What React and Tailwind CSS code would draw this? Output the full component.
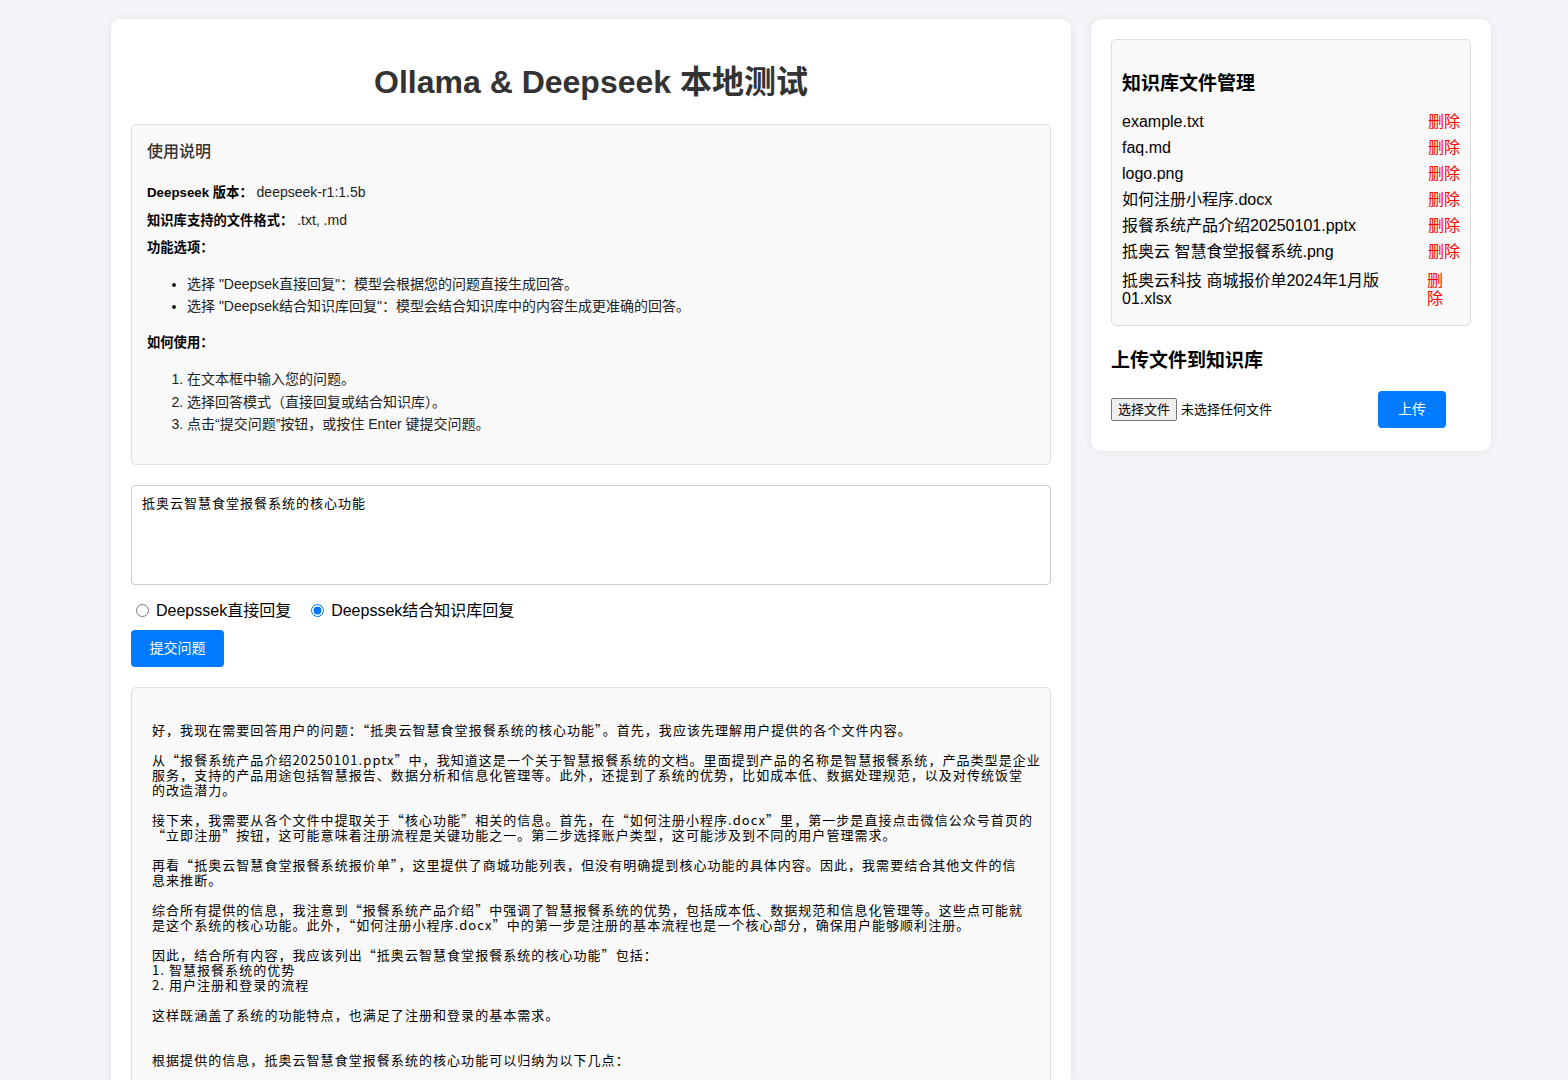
const FILES = [
  'example.txt',
  'faq.md',
  'logo.png',
  '如何注册小程序.docx',
  '报餐系统产品介绍20250101.pptx',
  '抵奥云 智慧食堂报餐系统.png',
];

const ANSWER = [
  '',
  '好，我现在需要回答用户的问题：“抵奥云智慧食堂报餐系统的核心功能”。首先，我应该先理解用户提供的各个文件内容。',
  '',
  '从“报餐系统产品介绍20250101.pptx”中，我知道这是一个关于智慧报餐系统的文档。里面提到产品的名称是智慧报餐系统，产品类型是企业',
  '服务，支持的产品用途包括智慧报告、数据分析和信息化管理等。此外，还提到了系统的优势，比如成本低、数据处理规范，以及对传统饭堂',
  '的改造潜力。',
  '',
  '接下来，我需要从各个文件中提取关于“核心功能”相关的信息。首先，在“如何注册小程序.docx”里，第一步是直接点击微信公众号首页的',
  '“立即注册”按钮，这可能意味着注册流程是关键功能之一。第二步选择账户类型，这可能涉及到不同的用户管理需求。',
  '',
  '再看“抵奥云智慧食堂报餐系统报价单”，这里提供了商城功能列表，但没有明确提到核心功能的具体内容。因此，我需要结合其他文件的信',
  '息来推断。',
  '',
  '综合所有提供的信息，我注意到“报餐系统产品介绍”中强调了智慧报餐系统的优势，包括成本低、数据规范和信息化管理等。这些点可能就',
  '是这个系统的核心功能。此外，“如何注册小程序.docx”中的第一步是注册的基本流程也是一个核心部分，确保用户能够顺利注册。',
  '',
  '因此，结合所有内容，我应该列出“抵奥云智慧食堂报餐系统的核心功能”包括：',
  '1. 智慧报餐系统的优势',
  '2. 用户注册和登录的流程',
  '',
  '这样既涵盖了系统的功能特点，也满足了注册和登录的基本需求。',
  '',
  '',
  '根据提供的信息，抵奥云智慧食堂报餐系统的核心功能可以归纳为以下几点：',
  '',
].join('\n');

function FileRow({ name }) {
  return (
    <li className="flex justify-between leading-[18px] py-[4px]">
      <span>{name}</span>
      <span className="text-[#ff0000] cursor-pointer">删除</span>
    </li>
  );
}

export default function App() {
  return (
    <div className="min-h-screen bg-[#f4f4f9] font-['Liberation_Sans','Noto_Sans_CJK_SC',sans-serif] text-black">
      <div className="flex items-start gap-5 pl-[111px] pt-[19px]">

        {/* main column */}
        <div className="w-[960px] bg-white rounded-[10px] shadow-[0_0_10px_rgba(0,0,0,0.08)] px-5 pt-5 pb-0 overflow-hidden">
          <h1 className="mt-[23px] text-center text-[32px] leading-[40px] font-bold text-[#333]">
            Ollama &amp; Deepseek 本地测试
          </h1>

          <div className="mt-[22px] bg-[#f9f9f9] border border-[#ddd] rounded-[5px] px-[15px] pt-[17px] pb-[28px] text-[#222]">
            <h3 className="text-[16px] leading-[20px] font-medium text-[#333]">使用说明</h3>
            <p className="mt-[21px] h-[18px] text-[14px] leading-[18px]">
              <strong className="text-[13.3px] font-bold text-black">Deepseek 版本：</strong> deepseek-r1:1.5b
            </p>
            <p className="mt-[10px] h-[18px] text-[14px] leading-[18px]">
              <strong className="text-[13.3px] font-bold text-black">知识库支持的文件格式：</strong> .txt, .md
            </p>
            <p className="mt-[9px] h-[18px] text-[14px] leading-[18px]">
              <strong className="text-[13.3px] font-bold text-black">功能选项：</strong>
            </p>
            <ul className="mt-[17px] pl-10 list-disc text-[14px] leading-[22px]">
              <li>选择 "Deepsek直接回复"：模型会根据您的问题直接生成回答。</li>
              <li>选择 "Deepsek结合知识库回复"：模型会结合知识库中的内容生成更准确的回答。</li>
            </ul>
            <p className="mt-[16px] h-[18px] text-[14px] leading-[18px]">
              <strong className="text-[13.3px] font-bold text-black">如何使用：</strong>
            </p>
            <ol className="mt-[17px] pl-10 list-decimal text-[14px] leading-[22.5px]">
              <li>在文本框中输入您的问题。</li>
              <li>选择回答模式（直接回复或结合知识库）。</li>
              <li>点击“提交问题”按钮，或按住 Enter 键提交问题。</li>
            </ol>
          </div>

          <textarea
            className="mt-5 block w-full h-[100px] resize-none border border-[#ccc] rounded-[4px] p-[10px] pt-[9px] text-[13px] leading-[15px] tracking-[1px] font-['Noto_Sans_CJK_SC',monospace] text-black outline-none"
            defaultValue="抵奥云智慧食堂报餐系统的核心功能"
          />

          <div className="mt-[15px] flex items-center text-[16px] leading-[22px]">
            <label className="flex items-center">
              <input type="radio" name="mode" className="ml-[5px] mr-[7px] w-[13px] h-[13px]" />
              Deepssek直接回复
            </label>
            <label className="flex items-center ml-[15px]">
              <input type="radio" name="mode" defaultChecked className="ml-[5px] mr-[7px] w-[13px] h-[13px]" />
              Deepssek结合知识库回复
            </label>
          </div>

          <button className="mt-[8px] h-[37px] px-[18.5px] bg-[#007bff] text-white text-[14px] rounded-[4px]">
            提交问题
          </button>

          <div className="mt-5 bg-[#f9f9f9] border border-[#ddd] rounded-[5px] px-5 pt-[19px] pb-5">
            <pre className="whitespace-pre text-[13px] leading-[15px] tracking-[1.05px] font-['Noto_Sans_CJK_SC',monospace] text-black">
              {ANSWER}
            </pre>
          </div>
        </div>

        {/* side column */}
        <div className="w-[400px] bg-white rounded-[10px] shadow-[0_0_10px_rgba(0,0,0,0.08)] px-5 pt-5 pb-[23px]">
          <div className="bg-[#f9f9f9] border border-[#ddd] rounded-[5px] px-[10px] pt-[33px] pb-[13px] text-[16px]">
            <h3 className="text-[19px] leading-[22px] font-bold">知识库文件管理</h3>
            <ul className="mt-[14px]">
              {FILES.map(f => <FileRow key={f} name={f} />)}
              <li className="flex justify-between leading-[18px] pt-[7px] pb-[4px]">
                <span className="w-[300px]">抵奥云科技 商城报价单2024年1月版01.xlsx</span>
                <span className="w-[33px] pr-[2px] text-[#ff0000] cursor-pointer">删除</span>
              </li>
            </ul>
          </div>

          <h3 className="mt-[24px] text-[19px] leading-[22px] font-bold">上传文件到知识库</h3>

          <div className="mt-[19px] flex items-center">
            <div className="w-[267px] flex items-center text-[13px]">
              <span className="px-[6px] h-[23px] leading-[21px] border border-[#767676] bg-[#efefef] rounded-[2px]">选择文件</span>
              <span className="ml-[4px]">未选择任何文件</span>
            </div>
            <button className="h-[37px] px-5 bg-[#007bff] text-white text-[14px] rounded-[4px]">上传</button>
          </div>
        </div>

      </div>
    </div>
  );
}
